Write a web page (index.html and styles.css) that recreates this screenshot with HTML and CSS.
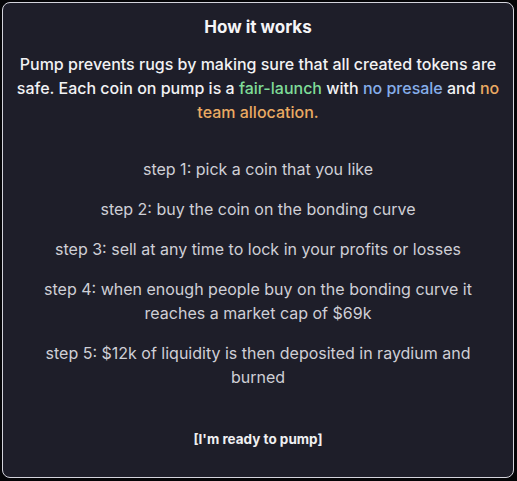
FILE: index.html
```html
<!DOCTYPE html>
<html>
<head>
<meta charset="utf-8">
<link rel="stylesheet" href="styles.css">
</head>
<body>
<div class="card">
  <h2 class="title">How it works</h2>
  <p class="intro">Pump prevents rugs by making sure that all created tokens are safe. Each coin on pump is a <span class="green">fair-launch</span> with <span class="blue">no presale</span> and <span class="orange">no team allocation.</span></p>
  <div class="steps">
    <p>step 1: pick a coin that you like</p>
    <p>step 2: buy the coin on the bonding curve</p>
    <p>step 3: sell at any time to lock in your profits or losses</p>
    <p>step 4: when enough people buy on the bonding curve it reaches a market cap of $69k</p>
    <p>step 5: $12k of liquidity is then deposited in raydium and burned</p>
  </div>
  <button class="ready">[I'm ready to pump]</button>
</div>
</body>
</html>
```
FILE: styles.css
```css
html, body {
  margin: 0;
  padding: 0;
  background: #050507;
  height: 100%;
}
body {
  font-family: Inter, "Noto Sans", sans-serif;
  padding: 2px 3px 3px 2px;
  box-sizing: border-box;
}
.card {
  box-sizing: border-box;
  height: 476px;
  background: #1e1e29;
  border: 1px solid #d4d4dc;
  border-radius: 8px;
  padding: 10px 12px 0 12px;
  display: flex;
  flex-direction: column;
  align-items: center;
  text-align: center;
}
.title {
  margin: 0;
  font-size: 17px;
  line-height: 28px;
  font-weight: 700;
  color: #f5f5f7;
}
.intro {
  margin: 11px 0 0 0;
  font-size: 16px;
  line-height: 24px;
  font-weight: 500;
  color: #f2f2f4;
}
.green { color: #7fdc98; }
.blue { color: #86aeea; }
.orange { color: #eaaa62; }
.steps {
  margin-top: 33px;
  padding: 0 8px;
  display: flex;
  flex-direction: column;
  gap: 16px;
}
.steps p {
  margin: 0;
  font-size: 16px;
  line-height: 24px;
  color: #cfcfd6;
}
.ready {
  margin-top: 40px;
  background: none;
  border: none;
  padding: 0;
  font-family: inherit;
  font-size: 13.5px;
  line-height: 20px;
  font-weight: 700;
  color: #f0f0f2;
  cursor: pointer;
}
```
